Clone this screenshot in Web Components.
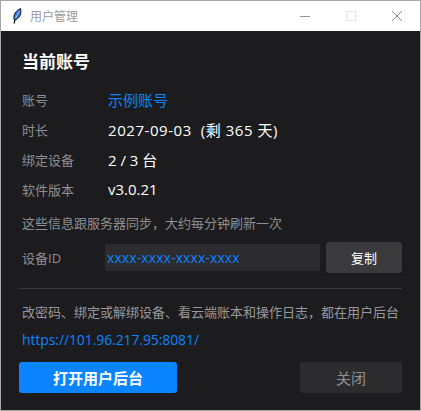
<!DOCTYPE html>
<html>
<head>
<meta charset="utf-8">
<title>用户管理</title>
<style>
html, body { margin: 0; padding: 0; background: #1c1c1e; }
</style>
</head>
<body>
<account-window></account-window>
<script>
const FONT = '"Open Sans", "Noto Sans CJK SC", sans-serif';

class TitleBar extends HTMLElement {
    constructor() {
        super();
        this.attachShadow({ mode: "open" });
    }

    connectedCallback() {
        this.shadowRoot.innerHTML = `
        <style>
        :host {
            display: flex;
            align-items: center;
            height: 30px;
            background: #fff;
            color: #9a9a9a;
            font-size: 12px;
        }
        .feather { width: 16px; height: 16px; margin-left: 9px; margin-right: 4px; }
        .name { flex: 1; }
        .btn { width: 46px; height: 30px; display: flex; align-items: center; justify-content: center; }
        </style>
        <svg class="feather" viewBox="0 0 16 16">
            <path d="M4.2 15.5 L5 11" stroke="#000" stroke-width="1.2" fill="none"/>
            <path d="M4.5 12 C2.4 8 5.5 2.5 10.6 .6 C11.6 5 10 11 4.5 12Z" fill="#3576d2" stroke="#0e1a30" stroke-width="1"/>
            <path d="M5.5 10 L9.5 3" stroke="#a9cdf5" stroke-width="1" fill="none"/>
        </svg>
        <span class="name"><slot></slot></span>
        <span class="btn"><svg width="10" height="10" viewBox="0 0 10 10"><path d="M0 5.5H10" stroke="#999" stroke-width="1"/></svg></span>
        <span class="btn"><svg width="10" height="10" viewBox="0 0 10 10"><rect x=".5" y=".5" width="9" height="9" fill="none" stroke="#e6e6e6"/></svg></span>
        <span class="btn"><svg width="10" height="10" viewBox="0 0 10 10"><path d="M0 0L10 10M10 0L0 10" stroke="#8a8a8a" stroke-width="1"/></svg></span>
        `;
    }
}

class InfoRow extends HTMLElement {
    constructor() {
        super();
        this.attachShadow({ mode: "open" });
    }

    connectedCallback() {
        this.shadowRoot.innerHTML = `
        <style>
        :host {
            display: grid;
            grid-template-columns: 86px 1fr;
            align-items: center;
            height: 30px;
        }
        .label { color: #8e8e93; font-size: 13px; }
        .value { color: var(--value-color, #fff); font-size: 15px; }
        </style>
        <span class="label">${this.getAttribute("label")}</span>
        <span class="value"><slot></slot></span>
        `;
    }
}

class FlatButton extends HTMLElement {
    constructor() {
        super();
        this.attachShadow({ mode: "open" });
    }

    connectedCallback() {
        this.shadowRoot.innerHTML = `
        <style>
        :host {
            display: flex;
            align-items: center;
            justify-content: center;
            height: 31px;
            border-radius: 3px;
            font-size: var(--btn-size, 13px);
            background: var(--btn-bg, #3a3a3c);
            color: var(--btn-color, #fff);
            font-weight: var(--btn-weight, 400);
        }
        </style>
        <slot></slot>
        `;
    }
}

class AccountWindow extends HTMLElement {
    constructor() {
        super();
        this.attachShadow({ mode: "open" });
    }

    connectedCallback() {
        this.shadowRoot.innerHTML = `
        <style>
        :host {
            display: block;
            box-sizing: border-box;
            width: 421px;
            height: 411px;
            border: 1px solid #a6a6a6;
            background: #1c1c1e;
            font-family: ${FONT};
            overflow: hidden;
        }
        main { padding: 0 18px 0 18px; }
        h1 { margin: 0; padding: 17px 0 8px 3px; font-size: 17px; line-height: 28px; color: #fff; font-weight: 700; height: 28px; }
        .rows { padding-left: 3px; }
        .note { margin: 0; padding-left: 3px; margin-top: 3px; height: 32px; line-height: 32px; font-size: 13px; color: #8e8e93; }
        .device { display: flex; align-items: center; height: 31px; margin-top: 3px; }
        .device .label { width: 83px; margin-left: 3px; font-size: 13px; color: #8e8e93; }
        .id { box-sizing: border-box; width: 215px; height: 27px; line-height: 27px; background: #2c2c2e; color: #0a84ff; font-size: 14px; letter-spacing: .1px; padding-left: 2px; margin-right: 6px; }
        .device flat-button { width: 76px; }
        hr { border: 0; height: 1px; background: #3a3a3c; margin: 15px 0 0 0; }
        .manage { margin: 0; padding-left: 3px; height: 24px; line-height: 24px; margin-top: 11px; font-size: 13px; color: #98989d; white-space: nowrap; }
        .link { padding-left: 3px; height: 26px; line-height: 26px; margin-top: 3px; font-size: 14px; letter-spacing: -.1px; color: #0a84ff; }
        .actions { display: flex; justify-content: space-between; margin-top: 9px; }
        .open { width: 158px; --btn-bg: #0a84ff; --btn-weight: 700; --btn-size: 15px; }
        .close { width: 102px; --btn-bg: #2c2c2e; --btn-color: #8e8e93; --btn-size: 15px; }
        </style>
        <title-bar>用户管理</title-bar>
        <main>
            <h1>当前账号</h1>
            <div class="rows">
                <info-row label="账号" style="--value-color:#0a84ff">示例账号</info-row>
                <info-row label="时长"><span style="letter-spacing:.55px">2027-09-03&nbsp; (剩 365 天)</span></info-row>
                <info-row label="绑定设备">2 / 3 台</info-row>
                <info-row label="软件版本">v3.0.21</info-row>
            </div>
            <p class="note">这些信息跟服务器同步，大约每分钟刷新一次</p>
            <div class="device">
                <span class="label">设备ID</span>
                <span class="id">xxxx-xxxx-xxxx-xxxx</span>
                <flat-button>复制</flat-button>
            </div>
            <hr>
            <p class="manage">改密码、绑定或解绑设备、看云端账本和操作日志，都在用户后台</p>
            <div class="link">https://101.96.217.95:8081/</div>
            <div class="actions">
                <flat-button class="open">打开用户后台</flat-button>
                <flat-button class="close">关闭</flat-button>
            </div>
        </main>
        `;
    }
}

customElements.define("title-bar", TitleBar);
customElements.define("info-row", InfoRow);
customElements.define("flat-button", FlatButton);
customElements.define("account-window", AccountWindow);
</script>
</body>
</html>
